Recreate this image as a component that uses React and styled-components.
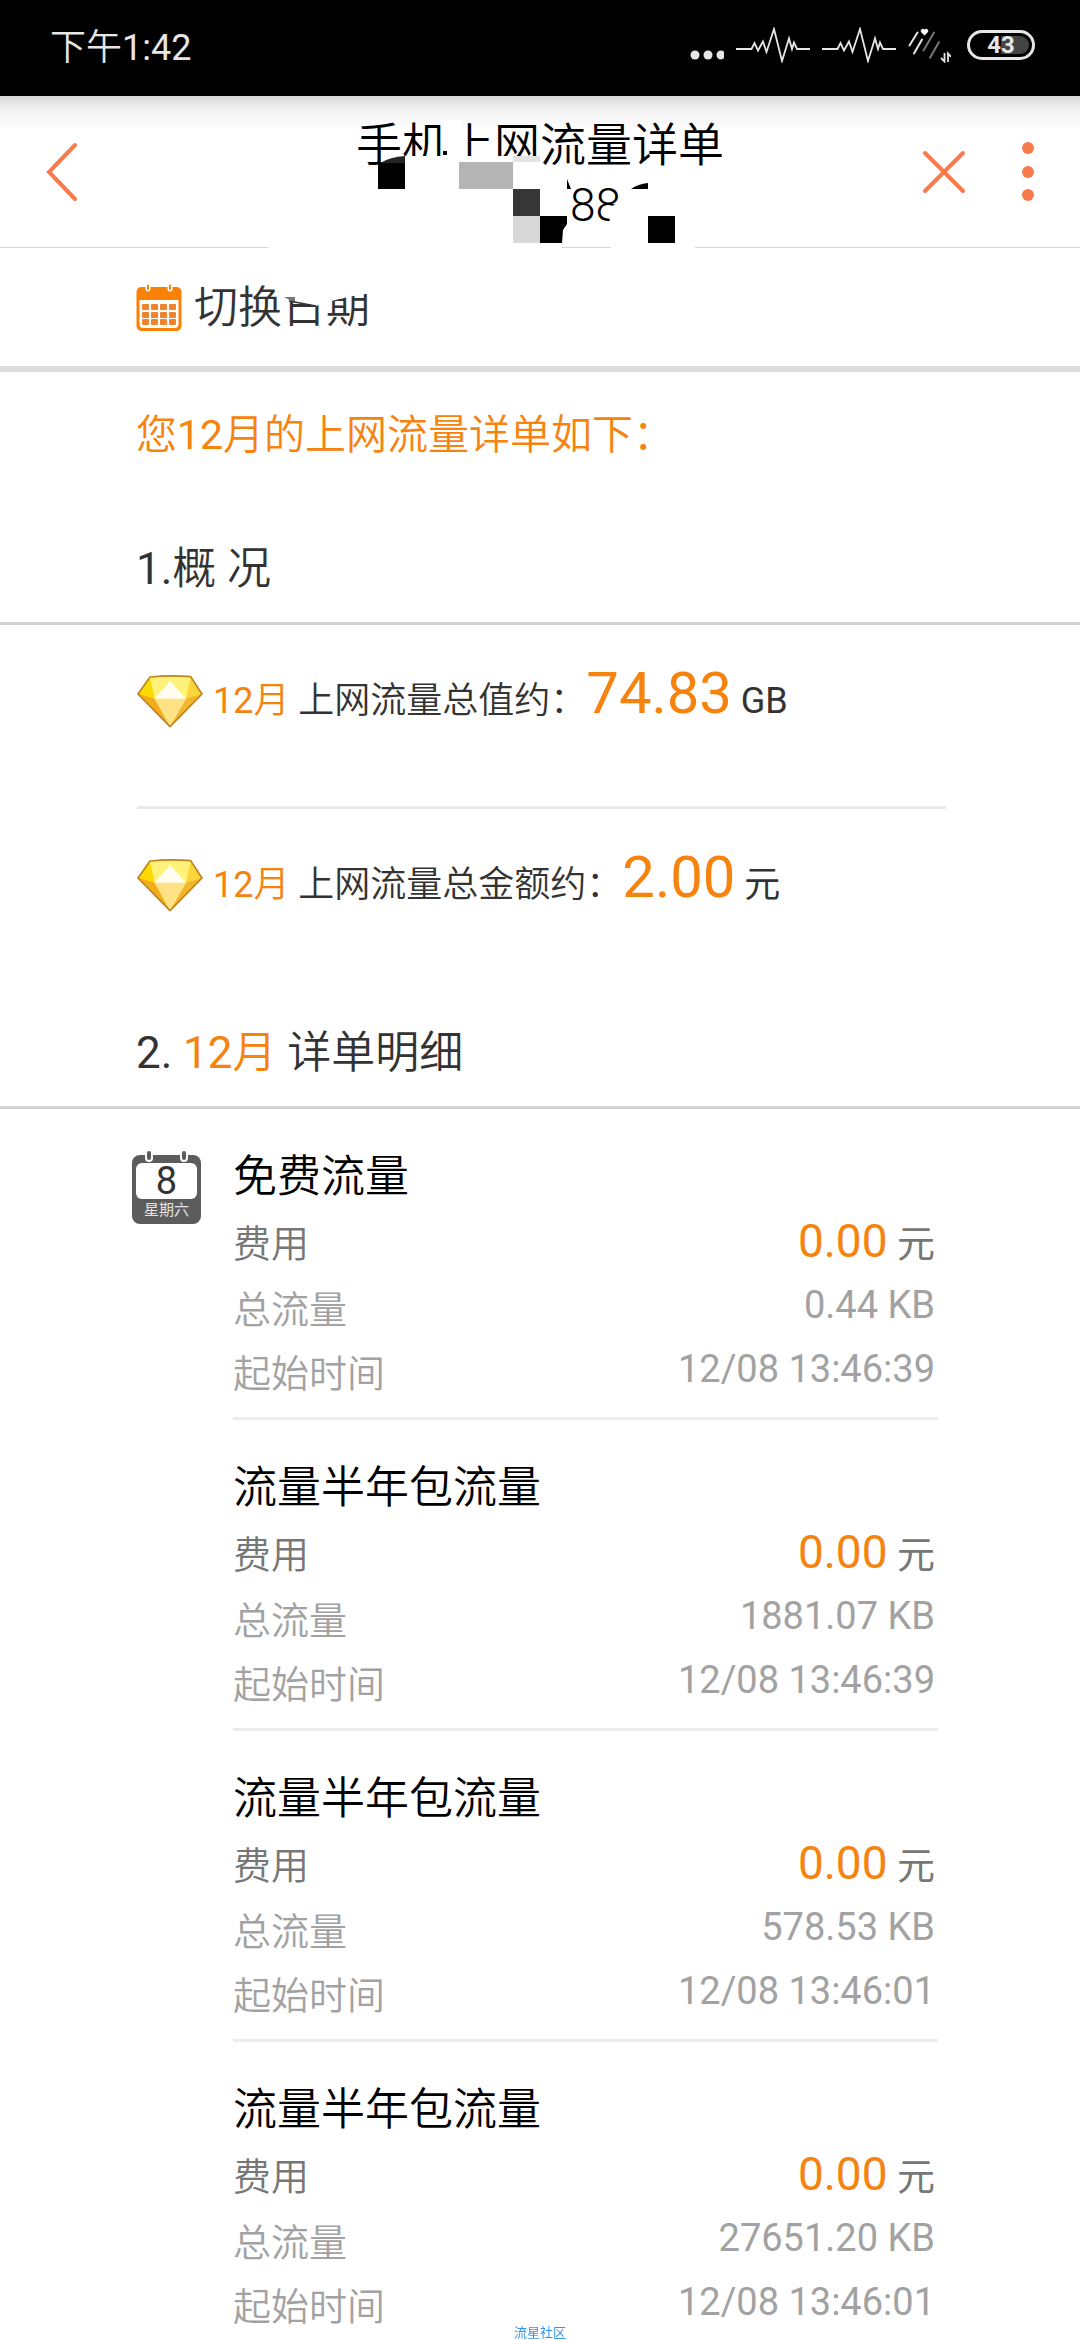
import React from 'react';
import styled, { createGlobalStyle } from 'styled-components';

const GlobalStyle = createGlobalStyle`
  * {
    box-sizing: border-box;
  }
  body {
    margin: 0;
    background: #fff;
    color: #333;
    font-family: Roboto, 'Noto Sans CJK SC', sans-serif;
  }
  button {
    border: 0;
    padding: 0;
    background: none;
    font: inherit;
    color: inherit;
    cursor: pointer;
  }
`;

const ORANGE = '#f7830f';
const CORAL = '#f97a4a';

const Screen = styled.div`
  display: flex;
  flex-direction: column;
  height: 100vh;
  overflow: hidden;
`;

// latin digits sit one weight above the chinese text around them
const Latin = styled.span`
  font-weight: 400;
`;

const StatusBar = styled.div`
  display: flex;
  flex: none;
  align-items: center;
  justify-content: space-between;
  height: 96px;
  padding: 0 45px 6px 50px;
  background: #000;
  color: #e6e6e6;
`;

const Clock = styled.time`
  padding-top: 6px;
  font-size: 36px;
  font-weight: 350;
  line-height: 48px;
`;

const StatusIcons = styled.div`
  display: flex;
  align-items: center;
  gap: 12px;
`;

const StatusSvg = styled.svg`
  display: block;
  width: ${({ $width }) => $width}px;
  height: 36px;
`;

const Battery = styled.div`
  width: 68px;
  height: 30px;
  margin-left: 4px;
  padding: 3px;
  border: 3px solid #e6e6e6;
  border-radius: 15px;
`;

const BatteryLevel = styled.div`
  border-radius: 9px;
  background: linear-gradient(to right, #000 50%, #444 50%);
  font-size: 24px;
  font-weight: 700;
  line-height: 18px;
  text-align: center;
`;

const Header = styled.header`
  position: relative;
  display: grid;
  flex: none;
  grid-template-columns: 1fr auto 1fr;
  align-items: center;
  height: 152px;
  padding: 0 45px;
  border-bottom: 1px solid #d8d8d8;
  background: linear-gradient(#d8d8d8, #f0f0f0 12px, #fff 34px);
`;

const Title = styled.h1`
  margin: 0;
  padding-top: 6px;
  color: #000;
  font-size: 46px;
  font-weight: 350;
  line-height: 60px;
`;

const TitleNumber = styled.span`
  display: block;
  padding-left: 214px;
`;

const Redaction = styled.svg`
  position: absolute;
  top: 4px;
  left: 50%;
  width: 400px;
  height: 160px;
  margin-left: -200px;
  overflow: visible;
  pointer-events: none;
`;

const Actions = styled.div`
  display: flex;
  justify-content: flex-end;
  gap: 54px;
`;

const IconButton = styled.button`
  justify-self: start;
  svg {
    display: block;
    stroke: ${CORAL};
    stroke-width: 4;
    stroke-linecap: round;
    fill: none;
  }
`;

const Content = styled.main`
  flex: 1;
  min-height: 0;
  overflow-y: auto;
  scrollbar-width: none;
`;

const DateBar = styled.div`
  display: flex;
  padding: 28px 136px 26px;
  border-bottom: 6px solid #dcdcdc;
`;

const DateButton = styled.button`
  display: flex;
  align-items: center;
  gap: 12px;
  font-size: 44px;
  font-weight: 350;
  line-height: 64px;
`;

const DateLabel = styled.span`
  position: relative;
  svg {
    position: absolute;
    top: 0;
    left: 0;
  }
`;

const Intro = styled.p`
  margin: 0;
  padding: 31px 136px 39px;
  color: ${ORANGE};
  font-size: 41px;
  font-weight: 350;
  line-height: 64px;
`;

const SectionTitle = styled.h2`
  margin: 0;
  padding: 31px 136px 21px;
  border-bottom: 3px solid #d2d2d2;
  font-size: 44px;
  font-weight: 350;
  line-height: 64px;
`;

const Accent = styled.span`
  color: ${ORANGE};
`;

const SummaryList = styled.ul`
  margin: 0;
  padding: 0 134px 0 137px;
  list-style: none;
`;

const SummaryRow = styled.li`
  display: flex;
  align-items: center;
  gap: 10px;
  padding: 36px 0 65px;
  font-size: 36px;
  font-weight: 350;
  line-height: 80px;
  & + & {
    border-top: 3px solid #e9e9e9;
  }
  svg {
    flex: none;
  }
`;

const SummaryText = styled.span`
  white-space: pre;
`;

const Total = styled.strong`
  color: ${ORANGE};
  font-size: 58px;
  font-weight: 400;
  line-height: 58px;
`;

const Details = styled.section`
  display: flex;
  gap: 32px;
  padding: 0 142px 0 132px;
`;

const DayBadge = styled.div`
  position: relative;
  flex: none;
  align-self: flex-start;
  width: 69px;
  margin-top: 46px;
  padding: 8px 4px 3px;
  border-radius: 8px;
  background: #5c5c5c;
  text-align: center;
  svg {
    position: absolute;
    top: -5px;
    left: 0;
  }
`;

const DayNumber = styled.div`
  border-radius: 6px;
  background: #fff;
  font-size: 38px;
  line-height: 36px;
`;

const Weekday = styled.div`
  color: #e4e4e4;
  font-size: 15px;
  line-height: 22px;
`;

const Records = styled.div`
  flex: 1;
`;

const Record = styled.article`
  padding: 36px 0 11px;
  border-bottom: 3px solid #ececec;
`;

const RecordTitle = styled.h3`
  margin: 0 0 3px;
  color: #000;
  font-size: 44px;
  font-weight: 350;
  line-height: 64px;
`;

const Fields = styled.dl`
  margin: 0;
`;

const Field = styled.div`
  display: flex;
  align-items: ${({ $fee }) => ($fee ? 'baseline' : 'flex-start')};
  justify-content: space-between;
  padding-right: 3px;
  padding-bottom: ${({ $fee }) => ($fee ? 2 : 0)}px;
  color: ${({ $fee }) => ($fee ? '#777' : '#a2a2a2')};
  font-size: 38px;
  line-height: 64px;
  dt {
    font-weight: 350;
  }
  dd {
    margin: 0;
    line-height: ${({ $fee }) => ($fee ? 64 : 54)}px;
  }
`;

const Fee = styled.span`
  color: ${ORANGE};
  font-size: 46px;
  line-height: 46px;
`;

const Watermark = styled.div`
  position: fixed;
  bottom: 0;
  left: 50%;
  margin-left: -26px;
  color: #2f96ee;
  font-size: 13px;
  line-height: 14px;
`;

const Pulse = () => (
  <StatusSvg $width={74} viewBox='0 0 74 36' aria-hidden='true'>
    <path
      d='M0 22H15.5L18.5 16L22 23.5L27 14.5L30.5 25L38 2L46 34L53 11.5L56 22L58 15.5L61 22H74'
      fill='none'
      stroke='#e6e6e6'
      strokeWidth='1.8'
    />
  </StatusSvg>
);

const Signal = () => (
  <StatusSvg $width={43} viewBox='0 0 43 36' aria-hidden='true'>
    <g fill='none' strokeWidth='2' strokeLinecap='round'>
      <path d='M9.5 5.5L1.5 18.5M14 12.6L6 26.5' stroke='#e6e6e6' />
      <path d='M26 5.5L15.5 23.4M31 15L22 30.8' stroke='#777' />
    </g>
    <path
      d='M16.5 8.5L13 5A2 2 0 0 1 16.5 2.8A2 2 0 0 1 20 5Z'
      fill='#fff'
    />
    <path
      d='M36.5 26V34.5L33 31M40 35V26.5L43 30'
      fill='none'
      stroke='#e6e6e6'
      strokeWidth='1.8'
    />
  </StatusSvg>
);

const CalendarIcon = () => (
  <svg width='46' height='48' viewBox='0 0 46 48' aria-hidden='true'>
    <rect x='0.5' y='3' width='45' height='44' rx='5' fill='#fb8006' />
    <path d='M3.5 16H42.5V40A4 4 0 0 1 38.5 44H7.5A4 4 0 0 1 3.5 40Z' fill='#fff' />
    {[20, 28, 35].map((y) =>
      [6, 15, 24, 33].map((x) => (
        <rect key={`${x}-${y}`} x={x} y={y} width='7' height='6' rx='1' fill='#f0832a' />
      ))
    )}
    {[12, 34].map((x) => (
      <g key={x}>
        <rect x={x - 2.5} y='0' width='5' height='7.5' rx='2.5' fill='#fff' />
        <rect x={x - 1} y='0.5' width='2' height='5.5' rx='1' fill='#fb8006' />
      </g>
    ))}
  </svg>
);

const Diamond = () => (
  <svg width='66' height='54' viewBox='51 75 198 160' aria-hidden='true'>
    <path d='M54 134L90 83Q150 77 212 82L246 134L150 232Z' fill='#fbd22f' />
    <path d='M90 83L54 134L104 148Z' fill='#fddb00' />
    <path d='M212 82L246 134L198 148Z' fill='#fbd63a' />
    <path d='M90 83Q150 77 212 82L198 148H104Z' fill='#fff27a' />
    <path d='M54 134L104 148L150 232Z' fill='#f3ad1b' />
    <path d='M246 134L198 148L150 232Z' fill='#f2b52e' />
    <path d='M104 148H198L150 232Z' fill='#ffe283' />
    <path d='M150 95L198 148H104Z' fill='#fffef0' />
    <path
      d='M54 134L90 83Q150 77 212 82L246 134L150 232Z'
      fill='none'
      stroke='#bd8420'
      strokeWidth='5'
      strokeLinejoin='round'
    />
  </svg>
);

const NumberRedaction = () => (
  <Redaction viewBox='0 0 400 160' aria-hidden='true'>
    <path d='M65 56H200V66H65ZM104 20H122V56H104Z' fill='#fff' />
    <path d='M103 51H107V55H103Z' fill='#000' />
    <path d='M276 104L268 108L270 122H292V100Z' fill='#fff' />
    <path d='M-71 146H221V150H-71ZM271 146H355V150H271Z' fill='#fff' />
    <path d='M38 62H65V89H38ZM308 116H335V143H308ZM200 116H227V124L223 130L222 143H200Z' />
    <path d='M40 63Q50 57 65 56V63Z' fill='#242424' />
    <path d='M119 62H173V89H119Z' fill='#b4b4b4' />
    <path d='M173 56H200V62H173Z' fill='#e3e3e3' />
    <path d='M173 89H200V116H173Z' fill='#373737' />
    <path d='M173 116H200V143H173Z' fill='#d8d8d8' />
    <path d='M227 79L231 89H227ZM291 89Q298 84 308 83V89Z' />
  </Redaction>
);

const summary = [
  { label: '上网流量总值约：', value: '74.83', unit: 'GB' },
  { label: '上网流量总金额约：', value: '2.00', unit: '元' },
];

const records = [
  { name: '免费流量', fee: '0.00', traffic: '0.44 KB', start: '12/08 13:46:39' },
  { name: '流量半年包流量', fee: '0.00', traffic: '1881.07 KB', start: '12/08 13:46:39' },
  { name: '流量半年包流量', fee: '0.00', traffic: '578.53 KB', start: '12/08 13:46:01' },
  { name: '流量半年包流量', fee: '0.00', traffic: '27651.20 KB', start: '12/08 13:46:01' },
];

const Month = () => (
  <Accent>
    <Latin>12</Latin>月
  </Accent>
);

const App = () => {
  return (
    <Screen lang='zh-CN'>
      <GlobalStyle />
      <StatusBar>
        <Clock>
          下午<Latin>1:42</Latin>
        </Clock>
        <StatusIcons>
          <StatusSvg $width={36} viewBox='0 0 36 36' aria-hidden='true'>
            <g fill='#e6e6e6'>
              <circle cx='7' cy='28' r='4.5' />
              <circle cx='20' cy='28' r='4.5' />
              <circle cx='33' cy='28' r='4.5' />
            </g>
          </StatusSvg>
          <Pulse />
          <Pulse />
          <Signal />
          <Battery>
            <BatteryLevel>43</BatteryLevel>
          </Battery>
        </StatusIcons>
      </StatusBar>

      <Header>
        <IconButton aria-label='返回'>
          <svg width='34' height='62' viewBox='0 0 34 62'>
            <path d='M30 4L4 31L30 58' />
          </svg>
        </IconButton>
        <Title>
          手机上网流量详单
          <TitleNumber>88</TitleNumber>
        </Title>
        <Actions>
          <IconButton aria-label='关闭'>
            <svg width='46' height='62' viewBox='0 0 46 62'>
              <path d='M4 12L42 50M42 12L4 50' />
            </svg>
          </IconButton>
          <IconButton aria-label='更多'>
            <svg width='14' height='62' viewBox='0 0 14 62'>
              <g fill={CORAL} stroke='none'>
                <circle cx='7' cy='7' r='6' />
                <circle cx='7' cy='31' r='6' />
                <circle cx='7' cy='54' r='6' />
              </g>
            </svg>
          </IconButton>
        </Actions>
        <NumberRedaction />
      </Header>

      <Content>
        <DateBar>
          <DateButton>
            <CalendarIcon />
            <DateLabel>
              切换日期
              <svg width='176' height='52' viewBox='0 0 176 52' aria-hidden='true'>
                <path d='M89 0H176V18H170L154 21L133 26L122 30L92 24L89 21Z' fill='#fff' />
                <path d='M90 21H101V27Z' fill='#777' />
                <path d='M95 25L122 30' stroke='#333' strokeWidth='1.5' />
              </svg>
            </DateLabel>
          </DateButton>
        </DateBar>

        <Intro>
          您<Latin>12</Latin>月的上网流量详单如下：
        </Intro>

        <SectionTitle>
          <Latin>1.</Latin>概 况
        </SectionTitle>
        <SummaryList>
          {summary.map(({ label, value, unit }) => (
            <SummaryRow key={label}>
              <Diamond />
              <SummaryText>
                <Month /> {label}
                <Total>{value}</Total> <Latin>{unit}</Latin>
              </SummaryText>
            </SummaryRow>
          ))}
        </SummaryList>

        <SectionTitle>
          <Latin>2.</Latin> <Month /> 详单明细
        </SectionTitle>
        <Details>
          <DayBadge>
            <DayNumber>8</DayNumber>
            <Weekday>星期六</Weekday>
            <svg width='69' height='13' viewBox='0 0 69 13' aria-hidden='true'>
              {[17, 52].map((x) => (
                <g key={x}>
                  <rect x={x - 4} y='0' width='8' height='12' rx='4' fill='#fff' />
                  <rect x={x - 2} y='1' width='4' height='9' rx='2' fill='#5c5c5c' />
                </g>
              ))}
            </svg>
          </DayBadge>
          <Records>
            {records.map(({ name, fee, traffic, start }, index) => (
              <Record key={index}>
                <RecordTitle>{name}</RecordTitle>
                <Fields>
                  <Field $fee>
                    <dt>费用</dt>
                    <dd>
                      <Fee>{fee}</Fee> 元
                    </dd>
                  </Field>
                  <Field>
                    <dt>总流量</dt>
                    <dd>{traffic}</dd>
                  </Field>
                  <Field>
                    <dt>起始时间</dt>
                    <dd>{start}</dd>
                  </Field>
                </Fields>
              </Record>
            ))}
          </Records>
        </Details>
      </Content>

      <Watermark>流星社区</Watermark>
    </Screen>
  );
};

export default App;
